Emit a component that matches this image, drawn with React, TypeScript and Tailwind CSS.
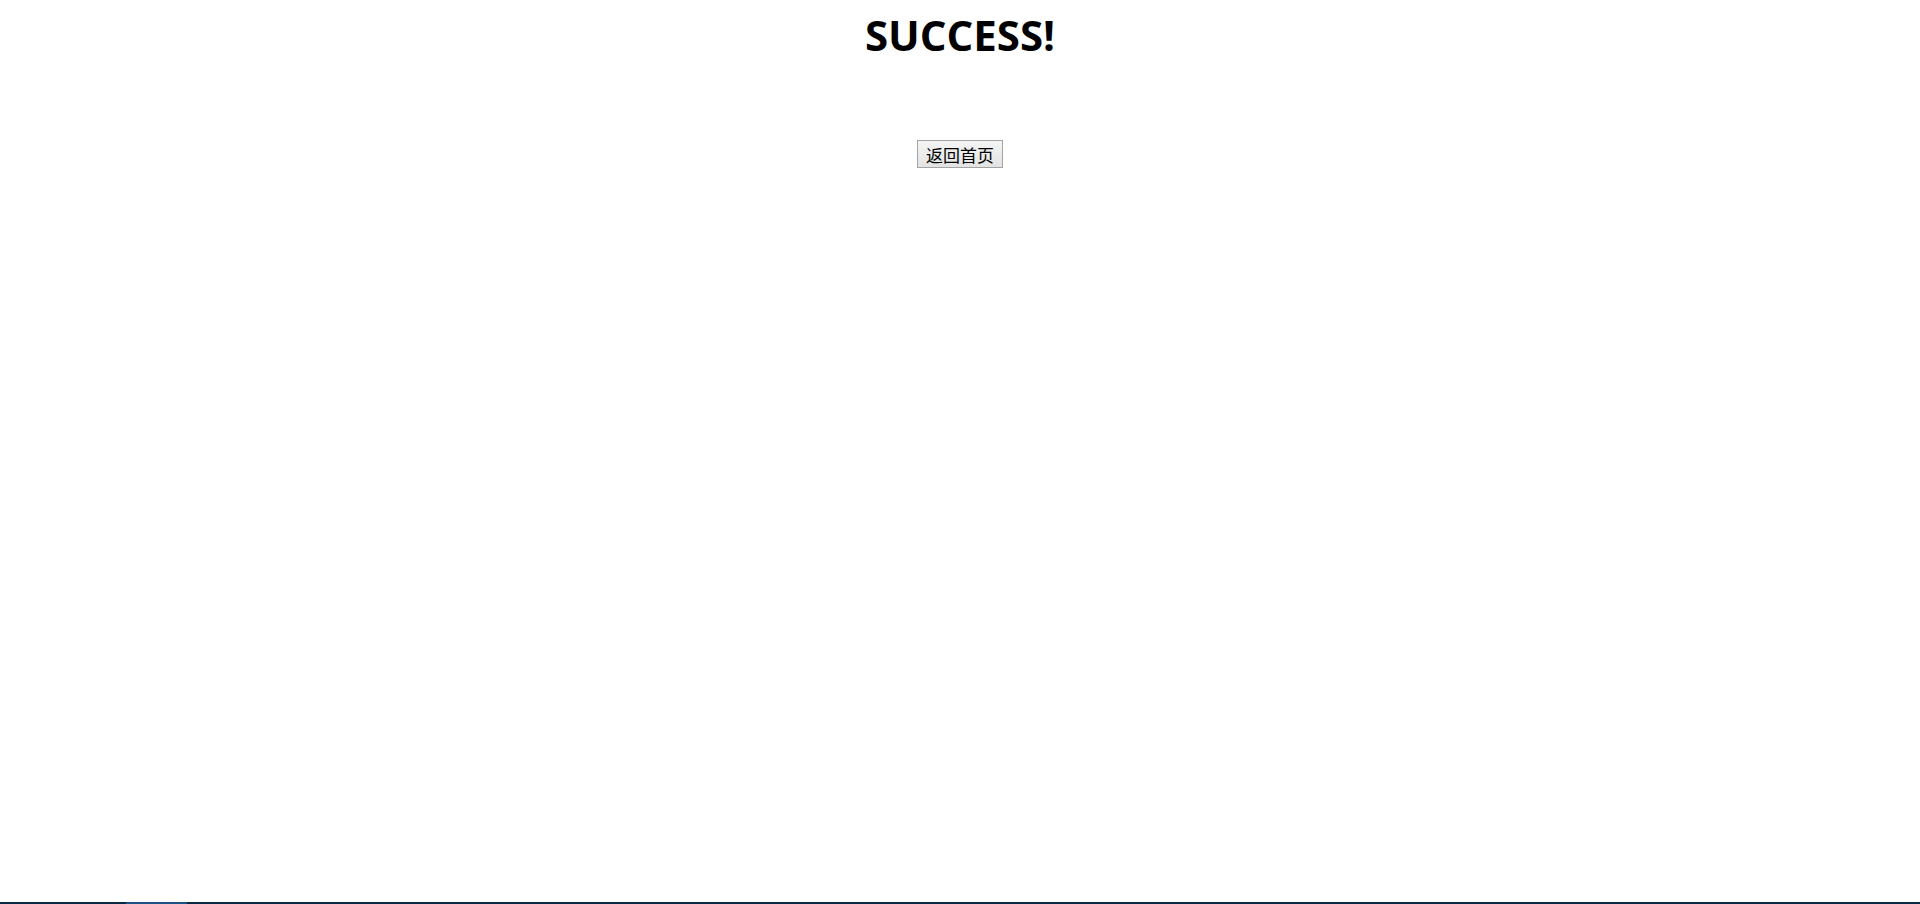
export default function App() {
  return (
    <div className="relative h-[904px] w-[1920px] overflow-hidden bg-white">
      <div className="flex flex-col items-center">
        <h1
          className="mt-[11px] text-[42px] font-bold leading-[48px] text-black"
          style={{ fontFamily: '"Open Sans", "Noto Sans", sans-serif' }}
        >
          SUCCESS!
        </h1>
        <button
          className="mt-[81px] flex h-[28px] w-[86px] items-center justify-center border border-[#a3a3a3] bg-gradient-to-b from-[#f4f4f4] to-[#e3e3e3] text-[17px] font-normal leading-none text-black"
          style={{ fontFamily: '"Noto Sans CJK SC", "Noto Sans", sans-serif' }}
        >
          返回首页
        </button>
      </div>
      <div className="absolute bottom-0 left-0 flex h-[2px] w-full bg-[#0b2843]">
        <div className="ml-[126px] h-full w-[61px] bg-[#1c5286]" />
      </div>
    </div>
  );
}
